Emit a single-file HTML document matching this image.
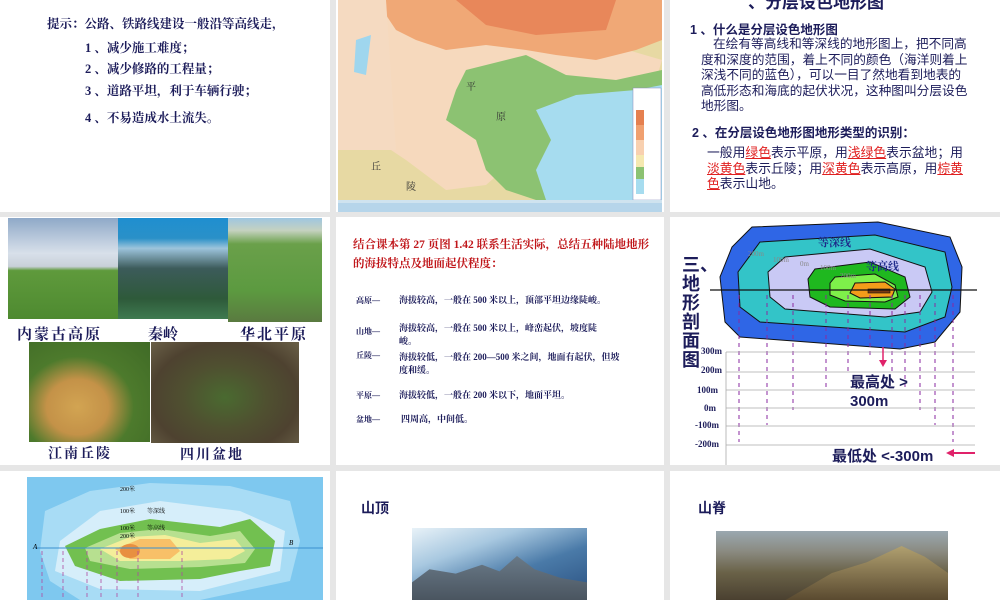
<!DOCTYPE html>
<html><head><meta charset="utf-8"><style>
*{margin:0;padding:0;box-sizing:border-box}
body{width:1000px;height:600px;background:#e6e6e6;position:relative;overflow:hidden;font-family:"Liberation Serif","Noto Serif CJK SC","Noto Sans CJK SC",serif}
.s{position:absolute;background:#fff;overflow:hidden}
.a{position:absolute;white-space:nowrap}
.nv{color:#1c1c5a;font-weight:bold}
.sans{font-family:"Liberation Sans","Noto Sans CJK SC",sans-serif}
u{color:#e02020;text-decoration:underline}
</style></head><body>

<!-- slide 1 -->
<div class="s" style="left:0;top:0;width:330px;height:212px">
<div class="a nv" style="left:47px;top:14px;font-size:12.5px">提示：公路、铁路线建设一般沿等高线走，</div>
<div class="a nv" style="left:85px;top:38px;font-size:12.5px">1 、减少施工难度；</div>
<div class="a nv" style="left:85px;top:59px;font-size:12.5px">2 、减少修路的工程量；</div>
<div class="a nv" style="left:85px;top:81px;font-size:12.5px">3 、道路平坦，利于车辆行驶；</div>
<div class="a nv" style="left:85px;top:108px;font-size:12.5px">4 、不易造成水土流失。</div>
</div>

<!-- slide 2 map -->
<div class="s" style="left:336px;top:0;width:328px;height:212px">
<svg width="328" height="212" style="position:absolute;left:0;top:0">
<rect x="2" y="0" width="324" height="201" fill="#f6d9bd"/>
<path d="M120 0 L326 0 L326 200 L2 200 L2 150 L40 140 L70 160 L110 190 L150 185 L190 150 L230 120 L260 100 L320 80 L326 60Z" fill="#e7d9a3"/>
<path d="M130 70 L190 55 L230 75 L280 80 L326 70 L326 200 L200 200 L170 190 L150 170 L140 140 L110 120 L120 90Z" fill="#8cc272"/>
<path d="M200 110 L240 95 L300 90 L326 85 L326 200 L210 200 L200 170 L215 140Z" fill="#a6dcef"/>
<path d="M40 0 L326 0 L326 40 L300 50 L260 60 L220 55 L190 50 L150 45 L110 50 L80 40 L60 30Z" fill="#f0a876"/>
<path d="M120 0 L280 0 L270 30 L200 35 L150 25Z" fill="#e8875a"/>
<path d="M2 0 L50 0 L60 150 L2 150Z" fill="#f5dac1"/>
<path d="M20 40 L35 35 L30 75 L18 72Z" fill="#9fd6ee"/>
<rect x="297" y="88" width="28" height="112" fill="#fff" stroke="#88b" stroke-width=".5"/>
<rect x="300" y="110" width="8" height="15" fill="#e58050"/><rect x="300" y="125" width="8" height="15" fill="#f0a070"/>
<rect x="300" y="140" width="8" height="15" fill="#f8d0b0"/><rect x="300" y="155" width="8" height="12" fill="#f5e8b0"/>
<rect x="300" y="167" width="8" height="12" fill="#8cc272"/><rect x="300" y="179" width="8" height="15" fill="#a6dcef"/>
<rect x="2" y="200" width="324" height="12" fill="#cfe3ef"/>
<rect x="2" y="203" width="324" height="9" fill="#b6d5ea"/>
</svg>
<div class="a" style="left:130px;top:78px;font-size:10px;color:#333">平</div>
<div class="a" style="left:160px;top:108px;font-size:10px;color:#333">原</div>
<div class="a" style="left:35px;top:158px;font-size:10px;color:#333">丘</div>
<div class="a" style="left:70px;top:178px;font-size:10px;color:#333">陵</div>
</div>

<!-- slide 3 -->
<div class="s sans" style="left:670px;top:0;width:330px;height:212px">
<div class="a nv" style="left:78px;top:-12px;font-size:17px">、分层设色地形图</div>
<div class="a nv" style="left:20px;top:19px;font-size:12.5px">1 、什么是分层设色地形图</div>
<div style="position:absolute;left:31px;top:37px;width:270px;font-size:12.7px;line-height:15.6px;color:#1c1c5a;text-indent:12px">在绘有等高线和等深线的地形图上，把不同高度和深度的范围，着上不同的颜色（海洋则着上深浅不同的蓝色），可以一目了然地看到地表的高低形态和海底的起伏状况，这种图叫分层设色地形图。</div>
<div class="a nv" style="left:22px;top:122px;font-size:12.5px">2 、在分层设色地形图地形类型的识别：</div>
<div style="position:absolute;left:37px;top:145px;width:266px;font-size:12.8px;line-height:15.6px;color:#1c1c5a">一般用<u>绿色</u>表示平原，用<u>浅绿色</u>表示盆地；用<u>淡黄色</u>表示丘陵；用<u>深黄色</u>表示高原，用<u>棕黄色</u>表示山地。</div>
</div>

<!-- slide 4 photos -->
<div class="s" style="left:0;top:217px;width:330px;height:248px">
<div style="position:absolute;left:8px;top:1px;width:110px;height:101px;background:linear-gradient(#8fa9c8 0,#d8e0ea 35%,#c8d0d8 48%,#5f9a3c 52%,#4e8a30 100%)"></div>
<div style="position:absolute;left:118px;top:1px;width:110px;height:101px;background:linear-gradient(#1f8fd0 0,#2a90c8 20%,#9dc4dc 30%,#3c5b5a 50%,#2e5a3a 80%,#3f7a50 100%)"></div>
<div style="position:absolute;left:228px;top:1px;width:94px;height:104px;background:linear-gradient(#9fc6e0 0,#c5d2c0 12%,#6aa04a 25%,#5c9a40 70%,#5a7a40 100%)"></div>
<div class="a nv" style="left:17px;top:106px;font-size:15px;letter-spacing:2px">内蒙古高原</div>
<div class="a nv" style="left:148px;top:106px;font-size:15px">秦岭</div>
<div class="a nv" style="left:240px;top:106px;font-size:15px;letter-spacing:2px">华北平原</div>
<div style="position:absolute;left:29px;top:125px;width:121px;height:100px;background:radial-gradient(ellipse at 40% 65%,#d2a452 0,#c49248 30%,#4d7a2c 55%,#3f6a26 100%)"></div>
<div style="position:absolute;left:151px;top:125px;width:148px;height:101px;background:radial-gradient(ellipse at 50% 55%,#4a6a30 0,#4f5030 40%,#4e4230 70%,#6a6048 100%)"></div>
<div class="a nv" style="left:48px;top:226px;font-size:14px;letter-spacing:2px">江南丘陵</div>
<div class="a nv" style="left:180px;top:227px;font-size:14px;letter-spacing:2px">四川盆地</div>
</div>

<!-- slide 5 -->
<div class="s" style="left:336px;top:217px;width:328px;height:248px;font-size:9px;font-weight:bold;color:#1c1c5a">
<div style="position:absolute;left:17px;top:19px;width:300px;font-size:11.5px;line-height:19px;color:#c0161a">结合课本第 27 页图 1.42 联系生活实际，总结五种陆地地形的海拔特点及地面起伏程度：</div>
<div class="a" style="left:20px;top:78px;font-size:8px">高原—</div><div class="a" style="left:63px;top:76px">海拔较高，一般在 500 米以上，顶部平坦边缘陡峻。</div>
<div class="a" style="left:20px;top:109px;font-size:8px">山地—</div><div style="position:absolute;left:63px;top:105px;width:215px;line-height:13px">海拔较高，一般在 500 米以上，峰峦起伏，坡度陡峻。</div>
<div class="a" style="left:20px;top:133px;font-size:8px">丘陵—</div><div style="position:absolute;left:63px;top:134px;width:225px;line-height:13px">海拔较低，一般在 200—500 米之间，地面有起伏，但坡度和缓。</div>
<div class="a" style="left:20px;top:173px;font-size:8px">平原—</div><div class="a" style="left:63px;top:171px">海拔较低，一般在 200 米以下，地面平坦。</div>
<div class="a" style="left:20px;top:197px;font-size:8px">盆地—</div><div class="a" style="left:65px;top:195px">四周高，中间低。</div>
</div>

<!-- slide 6 -->
<div class="s" style="left:670px;top:217px;width:330px;height:248px">
<svg width="330" height="248" style="position:absolute;left:0;top:0">
<path d="M82 10 L208 5 L280 20 L292 50 L290 95 L265 125 L230 132 L70 120 L55 105 L50 60 L62 30Z" fill="#2f66e6" stroke="#111" stroke-width="1"/>
<path d="M90 25 L205 18 L275 35 L282 70 L275 100 L235 115 L90 105 L70 90 L68 55Z" fill="#33c4c8" stroke="#111" stroke-width="1"/>
<path d="M115 40 L200 32 L255 50 L262 75 L250 95 L215 100 L115 92 L100 80 L98 55Z" fill="#c9c9f5" stroke="#111" stroke-width="1"/>
<path d="M145 52 L200 45 L235 60 L240 80 L225 92 L160 90 L140 80 L138 62Z" fill="#1fb81f" stroke="#111" stroke-width="1"/>
<path d="M165 60 L205 57 L225 68 L228 80 L215 85 L175 84 L160 78 L160 66Z" fill="#7ef04a" stroke="#111" stroke-width="1"/>
<path d="M185 66 L215 65 L225 72 L222 80 L190 81 L180 76Z" fill="#f39c1a" stroke="#111" stroke-width="1"/>
<rect x="198" y="72" width="22" height="4" fill="#7a3a10" stroke="#111" stroke-width=".6"/>
<line x1="40" y1="73" x2="307" y2="73" stroke="#111" stroke-width="1.2"/>
<g stroke="#8a2aa0" stroke-width="1" stroke-dasharray="4,4">
<line x1="69" y1="78" x2="69" y2="225"/><line x1="97" y1="78" x2="97" y2="208"/><line x1="123" y1="78" x2="123" y2="193"/>
<line x1="156" y1="78" x2="156" y2="172"/><line x1="178" y1="78" x2="178" y2="157"/><line x1="200" y1="78" x2="200" y2="140"/>
<line x1="222" y1="78" x2="222" y2="157"/><line x1="235" y1="78" x2="235" y2="172"/><line x1="250" y1="78" x2="250" y2="193"/>
<line x1="265" y1="78" x2="265" y2="208"/><line x1="283" y1="78" x2="283" y2="225"/>
</g>
<g stroke="#aaa" stroke-width=".8">
<line x1="56" y1="135" x2="305" y2="135"/><line x1="56" y1="155" x2="305" y2="155"/><line x1="56" y1="173" x2="305" y2="173"/>
<line x1="56" y1="191" x2="305" y2="191"/><line x1="56" y1="209" x2="305" y2="209"/><line x1="56" y1="228" x2="305" y2="228"/>
<line x1="56" y1="135" x2="56" y2="248"/>
</g>
<line x1="213" y1="130" x2="213" y2="145" stroke="#e0226a" stroke-width="1.5"/><path d="M209 143 L213 150 L217 143Z" fill="#e0226a"/>
<line x1="282" y1="236" x2="305" y2="236" stroke="#e0226a" stroke-width="2"/><path d="M284 232 L276 236 L284 240Z" fill="#e0226a"/>
</svg>
<div class="a nv" style="left:148px;top:17px;font-size:11px;color:#1e2a8a">等深线</div>
<div class="a nv" style="left:196px;top:41px;font-size:11px;color:#1e2a8a">等高线</div>
<div class="a" style="left:78px;top:33px;font-size:7px;color:#888">200m</div>
<div class="a" style="left:103px;top:39px;font-size:7px;color:#888">100m</div>
<div class="a" style="left:130px;top:43px;font-size:7px;color:#888">0m</div>
<div class="a" style="left:150px;top:47px;font-size:7px;color:#888">100m</div>
<div class="a" style="left:170px;top:55px;font-size:7px;color:#888">200m</div>
<div style="position:absolute;left:12px;top:38px;width:20px;font-size:18px;line-height:19px;font-weight:bold;color:#1c1c5a;font-family:'Noto Sans CJK SC',sans-serif">三、地形剖面图</div>
<div class="a nv" style="left:31px;top:129px;font-size:9px">300m</div>
<div class="a nv" style="left:31px;top:148px;font-size:9px">200m</div>
<div class="a nv" style="left:27px;top:168px;font-size:9px">100m</div>
<div class="a nv" style="left:34px;top:186px;font-size:9px">0m</div>
<div class="a nv" style="left:25px;top:203px;font-size:9px">-100m</div>
<div class="a nv" style="left:25px;top:222px;font-size:9px">-200m</div>
<div class="a nv sans" style="left:180px;top:154px;font-size:15px">最高处 &gt;</div>
<div class="a nv sans" style="left:180px;top:176px;font-size:15px">300m</div>
<div class="a nv sans" style="left:162px;top:228px;font-size:15px">最低处 &lt;-300m</div>
</div>

<!-- slide 7 -->
<div class="s" style="left:0;top:471px;width:330px;height:129px">
<svg width="330" height="129" style="position:absolute;left:0;top:0">
<rect x="27" y="6" width="296" height="123" fill="#7ec8ef"/>
<path d="M45 40 L90 20 L150 12 L230 15 L290 30 L300 70 L290 110 L200 129 L80 129 L50 110 L40 80Z" fill="#a8dcf5"/>
<path d="M60 70 L100 40 L160 30 L240 40 L285 60 L280 100 L200 120 L100 118 L55 100Z" fill="#d6eefa"/>
<path d="M65 75 L100 58 L150 48 L220 56 L250 48 L275 70 L270 95 L240 100 L200 108 L120 110 L75 95Z" fill="#72c050"/>
<path d="M85 77 L120 62 L160 58 L210 65 L240 60 L255 78 L245 92 L200 96 L130 98 L90 90Z" fill="#b7e090"/>
<path d="M100 78 L130 66 L165 64 L200 72 L235 68 L245 80 L230 88 L180 90 L120 90Z" fill="#f4ee9a"/>
<path d="M115 78 L140 68 L170 68 L180 80 L170 88 L130 88Z" fill="#f8c068"/>
<ellipse cx="130" cy="80" rx="10" ry="7" fill="#e89040"/>
<line x1="35" y1="77" x2="323" y2="77" stroke="#3a8fcf" stroke-width="1"/>
<g stroke="#b04aa0" stroke-width=".8" stroke-dasharray="4,3">
<line x1="42" y1="80" x2="42" y2="129"/><line x1="63" y1="80" x2="63" y2="129"/><line x1="87" y1="80" x2="87" y2="129"/>
<line x1="101" y1="80" x2="101" y2="129"/><line x1="117" y1="80" x2="117" y2="129"/><line x1="138" y1="80" x2="138" y2="129"/><line x1="182" y1="80" x2="182" y2="129"/>
</g>
</svg>
<div class="a" style="left:120px;top:13px;font-size:6px">200米</div>
<div class="a" style="left:120px;top:35px;font-size:6px">100米　　等深线</div>
<div class="a" style="left:120px;top:52px;font-size:6px">100米　　等高线</div>
<div class="a" style="left:120px;top:60px;font-size:6px">200米</div>
<div class="a" style="left:33px;top:72px;font-size:7px;font-style:italic">A</div>
<div class="a" style="left:289px;top:68px;font-size:7px;font-style:italic">B</div>
</div>

<!-- slide 8 -->
<div class="s" style="left:336px;top:471px;width:328px;height:129px">
<div class="a nv sans" style="left:25px;top:27px;font-size:14px">山顶</div>
<div style="position:absolute;left:76px;top:57px;width:175px;height:72px;background:linear-gradient(160deg,#e8f2f8 0,#a8c8e0 30%,#4a7aa8 60%,#2a5080 100%)"></div>
<div style="position:absolute;left:76px;top:85px;width:175px;height:44px;background:linear-gradient(#6a7a88,#4a5560);clip-path:polygon(0 60%,10% 30%,25% 40%,40% 20%,50% 35%,60% 0,70% 30%,85% 50%,100% 60%,100% 100%,0 100%)"></div>
</div>

<!-- slide 9 -->
<div class="s" style="left:670px;top:471px;width:330px;height:129px">
<div class="a nv sans" style="left:28px;top:27px;font-size:14px">山脊</div>
<div style="position:absolute;left:46px;top:60px;width:232px;height:69px;background:linear-gradient(#9aa8b0 0,#8a8a80 30%,#6a6248 60%,#4a4030 100%)"></div>
<div style="position:absolute;left:46px;top:75px;width:232px;height:54px;background:linear-gradient(#b0a070,#5a4a30);clip-path:polygon(30% 100%,50% 50%,65% 30%,80% 0,90% 20%,100% 50%,100% 100%)"></div>
</div>
</body></html>
